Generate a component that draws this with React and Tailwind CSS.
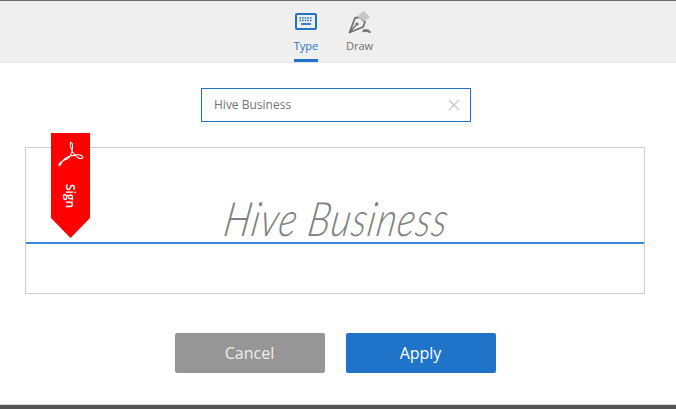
function KeyboardIcon() {
  return (
    <svg width="22" height="17" viewBox="0 0 22 17" className="block">
      <rect x="1" y="1" width="20" height="15" rx="1" fill="none" stroke="#1f73c9" strokeWidth="2" />
      <path d="M4.500 5h13M4.500 7.500h13" stroke="#1f73c9" strokeWidth="1.600" strokeDasharray="1.600 1" fill="none" />
      <path d="M6 11h10" stroke="#1f73c9" strokeWidth="1.800" fill="none" />
    </svg>
  );
}

function PenIcon() {
  return (
    <svg width="24" height="24" viewBox="0 0 24 24" className="block">
      <path d="M7 8 L1.500 22.500 L15 17 L17 12 L12 7 Z" fill="none" stroke="#707070" strokeWidth="1.800" strokeLinejoin="round" />
      <path d="M2 22 L8 15" stroke="#707070" strokeWidth="1.300" fill="none" />
      <circle cx="9" cy="14" r="1.600" fill="#707070" />
      <path d="M9.500 6.500 L15.500 0.500 L22 7 L16.500 11.500 Z" fill="#c8c8c8" />
      <path d="M15 22c.7-3 1.300-3 2 0 .5-3 1.300-3 2 0 .5-3 1.300-3 2 0l2 0" stroke="#707070" strokeWidth="1.500" fill="none" />
    </svg>
  );
}

function AcrobatIcon() {
  return (
    <svg width="28" height="28" viewBox="0 0 28 28" className="block">
      <path
        d="M2 25.500C1 23.500 7 20 11 18.500C14 16.500 15 12 15.500 8C16 4 14.500 1.500 13.500 2.500C12.500 4 14 10 17 14C19 17 23 19.500 25.500 18C27 16.500 24 14.500 20 14.800C15 15.200 9 17 6 20.500C4 22.800 3 26.800 2 25.500Z"
        fill="none"
        stroke="#ffffff"
        strokeWidth="1.100"
      />
    </svg>
  );
}

export default function App() {
  return (
    <div className="w-[676px] h-[409px] overflow-hidden bg-white flex flex-col font-['Open_Sans','Noto_Sans',sans-serif]">
      <div className="h-[63px] shrink-0 bg-[#efefef] border-t border-t-[#6a6a6a] border-b border-b-[#e4e4e4] flex justify-center gap-[29px] pr-[10px]">
        <div className="w-[24px] h-[61px] flex flex-col items-center border-b-[3px] border-[#1f73c9]">
          <div className="mt-[12px] h-[22px]">
            <KeyboardIcon />
          </div>
          <span className="mt-[4px] text-[11px] leading-[14px] text-[#1f73c9]">Type</span>
        </div>
        <div className="w-[25px] flex flex-col items-center">
          <div className="mt-[9px] h-[25px]">
            <PenIcon />
          </div>
          <span className="mt-[4px] text-[11px] leading-[14px] text-[#6e6e6e]">Draw</span>
        </div>
      </div>

      <div className="w-[670px] flex flex-col">
        <div className="flex justify-center mt-[25px] pl-[2px]">
          <div className="w-[270px] h-[34px] border border-[#1f73c9] flex items-center justify-between pl-[12px] pr-[10px]">
            <span className="text-[12px] text-[#757575]">Hive Business</span>
            <svg width="12" height="12" viewBox="0 0 12 12">
              <path d="M1 1l10 10M11 1L1 11" stroke="#c8c8c8" strokeWidth="1.400" />
            </svg>
          </div>
        </div>

        <div className="relative mx-[25px] mt-[25px] h-[147px] border border-[#cfcfcf] flex flex-col">
          <div className="h-[94px] flex items-end justify-center pr-[5px]">
            <span className="font-['Lato',sans-serif] font-light italic -skew-x-12 scale-y-125 origin-bottom text-[38px] leading-[40px] tracking-[1px] text-[#808080]">
              Hive Business
            </span>
          </div>
          <div className="h-[2px] bg-[#3a87d6]" />

          <div className="absolute left-[25px] top-[-15px] w-[39px] h-[105px] bg-[#ff0000] [clip-path:polygon(0_0,100%_0,100%_81%,50%_100%,0_81%)] flex flex-col items-center">
            <div className="mt-[7px]">
              <AcrobatIcon />
            </div>
            <span className="mt-[21px] text-[12px] font-semibold leading-[14px] text-white rotate-90">Sign</span>
          </div>
        </div>

        <div className="flex justify-center gap-[21px] mt-[39px]">
          <button className="w-[150px] h-[40px] rounded-[2px] bg-[#969696] text-[16px] text-[#eeeeee]">Cancel</button>
          <button className="w-[150px] h-[40px] rounded-[2px] bg-[#1f73c9] text-[16px] text-white">Apply</button>
        </div>
      </div>

      <div className="mt-auto h-[5px] bg-[#555555] border-t border-[#d8d8d8]" />
    </div>
  );
}
